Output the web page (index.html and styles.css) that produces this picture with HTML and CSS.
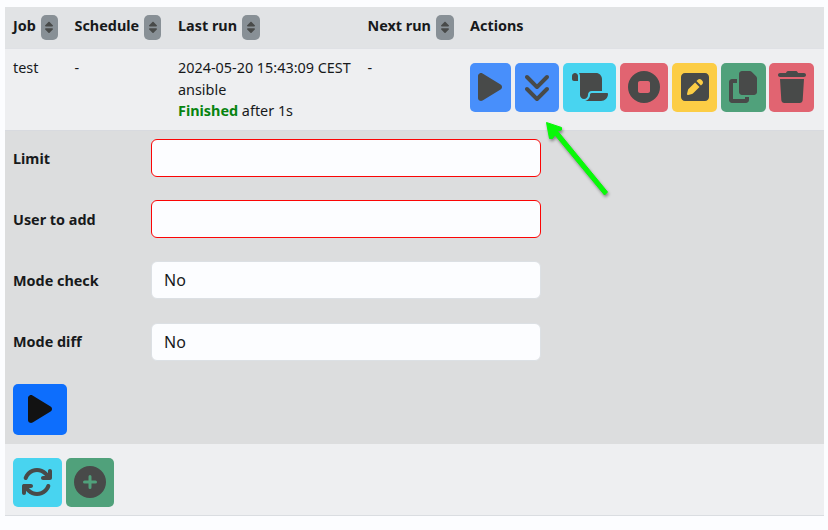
FILE: index.html
```html
<!DOCTYPE html>
<html lang="en">
<head>
<meta charset="utf-8">
<title>Jobs</title>
<link rel="stylesheet" href="styles.css">
</head>
<body>
<svg class="defs" aria-hidden="true">
<symbol id="sort" viewBox="0 0 320 512"><path d="M137.4 41.4c12.5-12.5 32.8-12.5 45.3 0l128 128c9.2 9.2 11.9 22.9 6.9 34.9s-16.6 19.8-29.6 19.8H32c-12.9 0-24.6-7.8-29.6-19.8s-2.2-25.7 6.9-34.9l128-128zm0 429.3l-128-128c-9.2-9.2-11.9-22.9-6.9-34.9s16.6-19.8 29.6-19.8H288c12.9 0 24.6 7.8 29.6 19.8s2.2 25.7-6.9 34.9l-128 128c-12.5 12.5-32.8 12.5-45.3 0z"/></symbol>
<symbol id="play" viewBox="0 0 384 512"><path d="M73 39c-14.8-9.1-33.4-9.4-48.5-.9S0 62.6 0 80V432c0 17.4 9.4 33.4 24.5 41.9s33.7 8.1 48.5-.9L361 297c14.3-8.7 23-24.2 23-41s-8.7-32.2-23-41L73 39z"/></symbol>
</svg>
<main class="jobs">
  <div class="row head">
    <div class="cell">Job <button class="sort"><svg><use href="#sort"/></svg></button></div>
    <div class="cell">Schedule <button class="sort"><svg><use href="#sort"/></svg></button></div>
    <div class="cell">Last run <button class="sort wide"><svg><use href="#sort"/></svg></button></div>
    <div class="cell">Next run <button class="sort wide"><svg><use href="#sort"/></svg></button></div>
    <div class="cell">Actions</div>
  </div>
  <div class="row job">
    <div class="cell">test</div>
    <div class="cell">-</div>
    <div class="cell">2024-05-20 15:43:09 CEST<br>ansible<br><span class="finished">Finished</span> after 1s</div>
    <div class="cell">-</div>
    <div class="actions">
      <button class="btn blue w41 snug"><svg viewBox="0 0 384 512"><use href="#play"/></svg></button>
      <button class="btn blue w44"><svg viewBox="0 0 448 512"><path d="M246.6 470.6c-12.5 12.5-32.8 12.5-45.3 0l-160-160c-12.5-12.5-12.5-32.8 0-45.3s32.8-12.5 45.3 0L224 402.7 361.4 265.4c12.5-12.5 32.8-12.5 45.3 0s12.5 32.8 0 45.3l-160 160zm160-352l-160 160c-12.5 12.5-32.8 12.5-45.3 0l-160-160c-12.5-12.5-12.5-32.8 0-45.3s32.8-12.5 45.3 0L224 210.7 361.4 73.4c12.5-12.5 32.8-12.5 45.3 0s12.5 32.8 0 45.3z"/></svg></button>
      <button class="btn cyan w53"><svg viewBox="0 0 576 512"><path d="M0 80v48c0 17.700 14.300 32 32 32H48 96V80c0-26.500-21.500-48-48-48S0 53.500 0 80zM112 32c10 13.400 16 30 16 48V384c0 35.300 28.700 64 64 64s64-28.700 64-64v-5.300c0-32.400 26.300-58.700 58.700-58.700H480V128c0-53-43-96-96-96H112zM464 480c61.900 0 112-50.100 112-112c0-8.800-7.200-16-16-16H314.700c-14.700 0-26.700 11.900-26.700 26.700V384c0 53-43 96-96 96H368h96z"/></svg></button>
      <button class="btn red w48"><svg viewBox="0 0 512 512"><path fill-rule="evenodd" d="M256 512A256 256 0 1 0 256 0a256 256 0 1 0 0 512zM192 160H320c17.700 0 32 14.300 32 32V320c0 17.700-14.300 32-32 32H192c-17.700 0-32-14.300-32-32V192c0-17.700 14.300-32 32-32z"/></svg></button>
      <button class="btn yellow w45"><svg viewBox="0 0 448 512"><path fill-rule="evenodd" d="M64 32C28.700 32 0 60.700 0 96V416c0 35.300 28.700 64 64 64H384c35.300 0 64-28.700 64-64V96c0-35.300-28.700-64-64-64H64zM325.800 139.700l14.400 14.400c15.600 15.600 15.600 40.900 0 56.600l-21.400 21.400-71-71 21.400-21.400c15.600-15.600 40.900-15.600 56.600 0zM119.900 289L225.100 183.800l71 71L190.900 359.900c-4.100 4.100-9.200 7-14.900 8.400l-60.100 15c-5.500 1.400-11.200-.2-15.200-4.200s-5.600-9.700-4.200-15.200l15-60.100c1.400-5.600 4.300-10.800 8.400-14.900z"/></svg></button>
      <button class="btn green w45 snug"><svg viewBox="0 0 448 512"><path d="M208 0H332.100c12.700 0 24.900 5.100 33.900 14.100l67.900 67.900c9 9 14.100 21.200 14.100 33.900V336c0 26.500-21.500 48-48 48H208c-26.500 0-48-21.500-48-48V48c0-26.500 21.500-48 48-48zM48 128h80v64H64V448H256V416h64v48c0 26.500-21.500 48-48 48H48c-26.500 0-48-21.500-48-48V176c0-26.500 21.500-48 48-48z"/></svg></button>
      <button class="btn red w45 last"><svg viewBox="0 0 448 512"><path d="M135.200 17.700L128 32H32C14.300 32 0 46.300 0 64S14.300 96 32 96H416c17.700 0 32-14.300 32-32s-14.300-32-32-32H320l-7.200-14.300C307.400 6.800 296.300 0 284.200 0H163.800c-12.100 0-23.200 6.800-28.600 17.700zM416 128H32L53.200 467c1.600 25.300 22.600 45 47.900 45H346.900c25.300 0 46.300-19.700 47.900-45L416 128z"/></svg></button>
    </div>
  </div>
  <div class="form">
    <label class="field"><span>Limit</span><input class="control required" type="text"></label>
    <label class="field"><span>User to add</span><input class="control required" type="text"></label>
    <label class="field"><span>Mode check</span><select class="control"><option>No</option><option>Yes</option></select></label>
    <label class="field"><span>Mode diff</span><select class="control"><option>No</option><option>Yes</option></select></label>
    <button class="btn run"><svg viewBox="0 0 384 512"><use href="#play"/></svg></button>
  </div>
  <div class="foot">
    <button class="btn cyan w49 snug"><svg viewBox="0 0 512 512"><path d="M105.100 202.600c7.700-21.800 20.200-42.300 37.800-59.800c62.500-62.500 163.800-62.500 226.300 0L386.300 160H352c-17.700 0-32 14.300-32 32s14.300 32 32 32H463.900c17.700 0 32-14.300 32-32V80c0-17.700-14.300-32-32-32s-32 14.300-32 32v35.200L414.400 97.600c-87.500-87.500-229.300-87.500-316.800 0C73.200 122 55.600 150.700 44.800 181.400c-5.900 16.700 2.900 34.900 19.500 40.800s34.900-2.900 40.800-19.500zM39 289.300c-5 1.500-9.800 4.200-13.700 8.200c-4 4-6.700 8.800-8.100 14c-.3 1.200-.6 2.500-.8 3.800c-.3 1.700-.4 3.400-.4 5.100V432c0 17.700 14.300 32 32 32s32-14.300 32-32V396.900l17.600 17.500c87.500 87.400 229.300 87.400 316.700 0c24.400-24.400 42.100-53.100 52.900-83.700c5.900-16.700-2.900-34.900-19.500-40.800s-34.900 2.900-40.800 19.500c-7.700 21.800-20.200 42.300-37.800 59.800c-62.500 62.500-163.800 62.500-226.300 0l-.1-.1L125.600 352H160c17.700 0 32-14.300 32-32s-14.300-32-32-32H48.400c-1.600 0-3.200 .1-4.800 .3s-3.100 .5-4.600 1z"/></svg></button>
    <button class="btn green w48"><svg viewBox="0 0 32 32"><path fill-rule="evenodd" d="M16 0a16 16 0 1 0 0 32a16 16 0 1 0 0-32zM14.500 21.500v-4h-4a1.500 1.500 0 0 1 0-3h4v-4a1.500 1.500 0 0 1 3 0v4h4a1.500 1.500 0 0 1 0 3h-4v4a1.500 1.500 0 0 1-3 0z"/></svg></button>
  </div>
</main>
<svg class="arrow" viewBox="0 0 76 86"><path d="M6.500 11.500L21.500 16.500L21.500 19L17.500 20L67.500 81L64.500 84L15 24L12.500 27.500L9.500 27.500z"/></svg>
</body>
</html>
```
FILE: styles.css
```css
* { box-sizing: border-box; }
body {
  margin: 0;
  padding: 7px 4px 0 5px;
  height: 530px;
  background: #fcfdff;
  color: #17191b;
  font: 14.4px/21.6px "Noto Sans", sans-serif;
  overflow: hidden;
}
.defs { display: none; }
svg { display: block; }
button { border: 0; font: inherit; }
.row {
  display: grid;
  grid-template-columns: 61.5px 103.500px 189.500px 102.500px 1fr;
  padding-left: 8px;
}
.head {
  height: 42px;
  padding-top: 8px;
  background: #e1e3e5;
  border-bottom: 1px solid #dfe1e5;
  font-weight: 700;
}
.head .cell { display: flex; justify-content: flex-start; align-items: flex-start; }
.sort {
  display: grid;
  place-items: center;
  width: 17px;
  height: 25px;
  margin-left: 5px;
  padding: 0;
  border-radius: 5px;
  background: #889096;
}
.sort.wide { width: 18px; }
.sort svg { width: 8px; height: 12.800px; fill: #484a49; }
.job { height: 81px; background: #eeeff1; padding-top: 8px; }
.finished { color: #078410; font-weight: 700; }
.actions { display: flex; gap: 4px; padding-top: 6px; }
.btn {
  display: grid;
  place-items: center;
  flex: none;
  height: 49px;
  padding: 0 0 1px;
  border-radius: 5px;
}
.btn svg { height: 32px; fill: #484a49; }
.snug { padding-right: 1px; }
.w41 { width: 41px; }
.w44 { width: 44px; }
.w45 { width: 45px; }
.w48 { width: 48px; }
.w49 { width: 49px; }
.w53 { width: 53px; }
.last { margin-left: -1px; }
.blue { background: #488ffb; }
.cyan { background: #48d4f0; }
.red { background: #e16471; }
.yellow { background: #fccd45; }
.green { background: #50a17b; }
.form {
  height: 314px;
  padding: 8px 8px 0;
  background: #dcddde;
  border-top: 1px solid #d8dadf;
}
.field {
  display: flex;
  height: 38px;
  margin-bottom: 23.200px;
  align-items: center;
  font-weight: 700;
}
.field span { width: 138px; padding-top: 1px; }
.control {
  appearance: none;
  width: 390px;
  height: 38px;
  padding: 0 12px;
  border: 1px solid #dce0e4;
  border-radius: 6px;
  background: #fcfdff;
  color: #17191b;
  font: 16px/24px "Noto Sans", sans-serif;
}
.required { border-color: #fb0505; }
.run { width: 54px; height: 51px; background: #0d6efd; }
.run svg { fill: #121212; }
.foot {
  display: flex;
  gap: 4px;
  height: 72px;
  padding: 14px 8px 0;
  background: #eeeff1;
  border-bottom: 1px solid #dadde1;
}
.arrow {
  position: absolute;
  left: 540px;
  top: 111px;
  width: 76px;
  height: 86px;
  fill: #08f908;
  stroke: #08f908;
  stroke-width: 1px;
  stroke-linejoin: round;
  filter: drop-shadow(1px 2px 1.500px #0006);
}
```
